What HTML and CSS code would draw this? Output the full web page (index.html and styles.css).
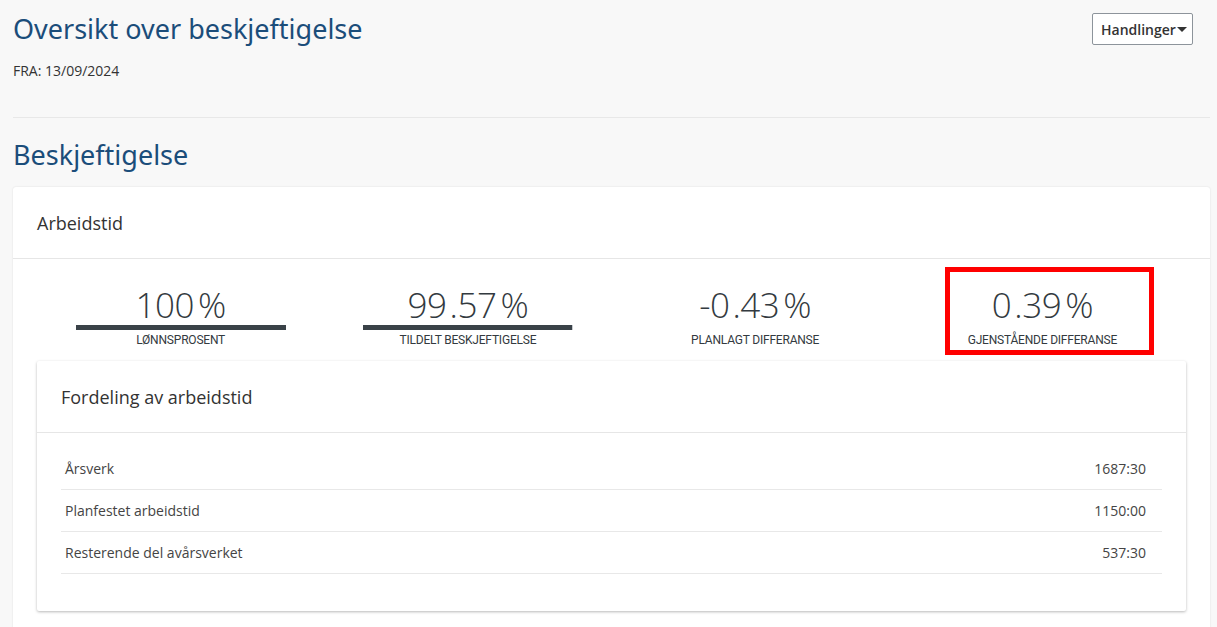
FILE: index.html
```html
<!DOCTYPE html>
<html lang="no">
<head>
<meta charset="utf-8">
<title>Oversikt over beskjeftigelse</title>
<link rel="stylesheet" href="styles.css">
</head>
<body>
<div class="page">
  <header class="top">
    <div class="top-left">
      <h1 class="title">Oversikt over beskjeftigelse</h1>
      <div class="from">FRA: 13/09/2024</div>
    </div>
    <button class="actions" type="button">Handlinger<span class="caret"></span></button>
  </header>

  <h2 class="section-title">Beskjeftigelse</h2>

  <section class="card">
    <div class="card-header">Arbeidstid</div>
    <div class="stats">
      <div class="stat">
        <div class="stat-box">
          <div class="stat-value">100<span class="pct">%</span></div>
          <div class="bar"><div class="bar-fill" style="width:100%"></div></div>
          <div class="stat-label">LØNNSPROSENT</div>
        </div>
      </div>
      <div class="stat">
        <div class="stat-box">
          <div class="stat-value">99<span class="dec">.57</span><span class="pct">%</span></div>
          <div class="bar"><div class="bar-fill" style="width:99.57%"></div></div>
          <div class="stat-label">TILDELT BESKJEFTIGELSE</div>
        </div>
      </div>
      <div class="stat">
        <div class="stat-box">
          <div class="stat-value">-0<span class="dec">.43</span><span class="pct">%</span></div>
          <div class="bar bar-empty"></div>
          <div class="stat-label">PLANLAGT DIFFERANSE</div>
        </div>
      </div>
      <div class="stat">
        <div class="stat-box highlight">
          <div class="stat-value">0<span class="dec">.39</span><span class="pct">%</span></div>
          <div class="bar bar-empty"></div>
          <div class="stat-label">GJENSTÅENDE DIFFERANSE</div>
        </div>
      </div>
    </div>

    <div class="inner-card">
      <div class="inner-header">Fordeling av arbeidstid</div>
      <div class="rows">
        <div class="row"><span>Årsverk</span><span>1687:30</span></div>
        <div class="row"><span>Planfestet arbeidstid</span><span>1150:00</span></div>
        <div class="row"><span>Resterende del avårsverket</span><span>537:30</span></div>
      </div>
    </div>
  </section>
</div>
</body>
</html>
```

FILE: styles.css
```css
* { box-sizing: border-box; }
html, body { margin: 0; padding: 0; }
body {
  background: #f8f8f8;
  font-family: "Open Sans", "Noto Sans", sans-serif;
  color: #333;
  overflow: hidden;
}
.page {
  padding: 0 7px 0 13px;
}
.top {
  display: flex;
  justify-content: space-between;
  align-items: flex-start;
  padding-top: 10px;
  padding-bottom: 37px;
  border-bottom: 1px solid #e8e8e8;
}
.title {
  margin: 0;
  font-family: "Noto Sans", "Open Sans", sans-serif;
  font-weight: 400;
  font-size: 27px;
  line-height: 38px;
  color: #1b4d7a;
}
.from {
  margin-top: 14px;
  font-size: 14px;
  line-height: 18px;
  color: #333;
}
.actions {
  margin-top: 3px;
  margin-right: 17px;
  width: 101px;
  height: 32px;
  padding: 0 0 0 8px;
  background: #fff;
  border: 1px solid #8d949b;
  border-radius: 2px;
  font-family: "Open Sans", sans-serif;
  font-weight: 600;
  font-size: 14px;
  color: #333;
  display: flex;
  align-items: center;
}
.caret {
  display: inline-block;
  width: 0;
  height: 0;
  margin-left: 1px;
  border-left: 5px solid transparent;
  border-right: 5px solid transparent;
  border-top: 5px solid #333;
}
.section-title {
  margin: 19px 0 14px;
  font-family: "Noto Sans", "Open Sans", sans-serif;
  font-weight: 400;
  font-size: 27px;
  line-height: 36px;
  color: #1b4d7a;
}
.card {
  background: #fff;
  border-radius: 3px;
  box-shadow: 0 0 2px rgba(0,0,0,0.12);
  padding-bottom: 30px;
}
.card-header {
  height: 72px;
  padding: 0 24px;
  display: flex;
  align-items: center;
  font-size: 18px;
  color: #333;
  border-bottom: 1px solid #e6e6e6;
}
.stats {
  display: grid;
  grid-template-columns: repeat(4, 1fr);
  padding: 0 24px;
}
.stat {
  display: flex;
  justify-content: center;
}
.stat-box {
  width: 210px;
  margin-top: 8px;
  padding: 13px 0 3px;
  border: 5px solid transparent;
  display: flex;
  flex-direction: column;
  align-items: center;
}
.stat-box.highlight {
  width: 209px;
  border-color: #f00;
  margin-left: 7px;
  margin-right: -7px;
  padding-right: 14px;
}
.stat-value {
  font-weight: 300;
  font-size: 35px;
  line-height: 40px;
  color: #333a40;
  letter-spacing: -0.5px;
  white-space: nowrap;
}
.dec { margin-left: 3px; }
.pct { margin-left: 4px; }
.bar {
  width: 210px;
  height: 5px;
  background: #c8ccd0;
  flex: none;
}
.stat-box.highlight .bar,
.stat-box .bar-empty { background: transparent; width: 100%; }
.bar-fill {
  height: 100%;
  background: #3a4248;
}
.stat-label {
  margin-top: 3px;
  font-family: "Roboto", sans-serif;
  font-size: 12px;
  line-height: 14px;
  color: #333a40;
  letter-spacing: -0.2px;
  white-space: nowrap;
}
.inner-card {
  margin: 6px 24px 0;
  background: #fff;
  border-radius: 2px;
  box-shadow: 0 1px 3px rgba(0,0,0,0.28);
  padding-bottom: 37px;
}
.inner-header {
  height: 72px;
  padding: 0 24px;
  display: flex;
  align-items: center;
  font-size: 18px;
  color: #333;
  border-bottom: 1px solid #e6e6e6;
}
.rows {
  padding: 15px 24px 0;
}
.row {
  display: flex;
  justify-content: space-between;
  height: 42px;
  align-items: center;
  padding: 0 16px 0 4px;
  border-bottom: 1px solid #e8e8e8;
  font-size: 14px;
  color: #444;
}
```
